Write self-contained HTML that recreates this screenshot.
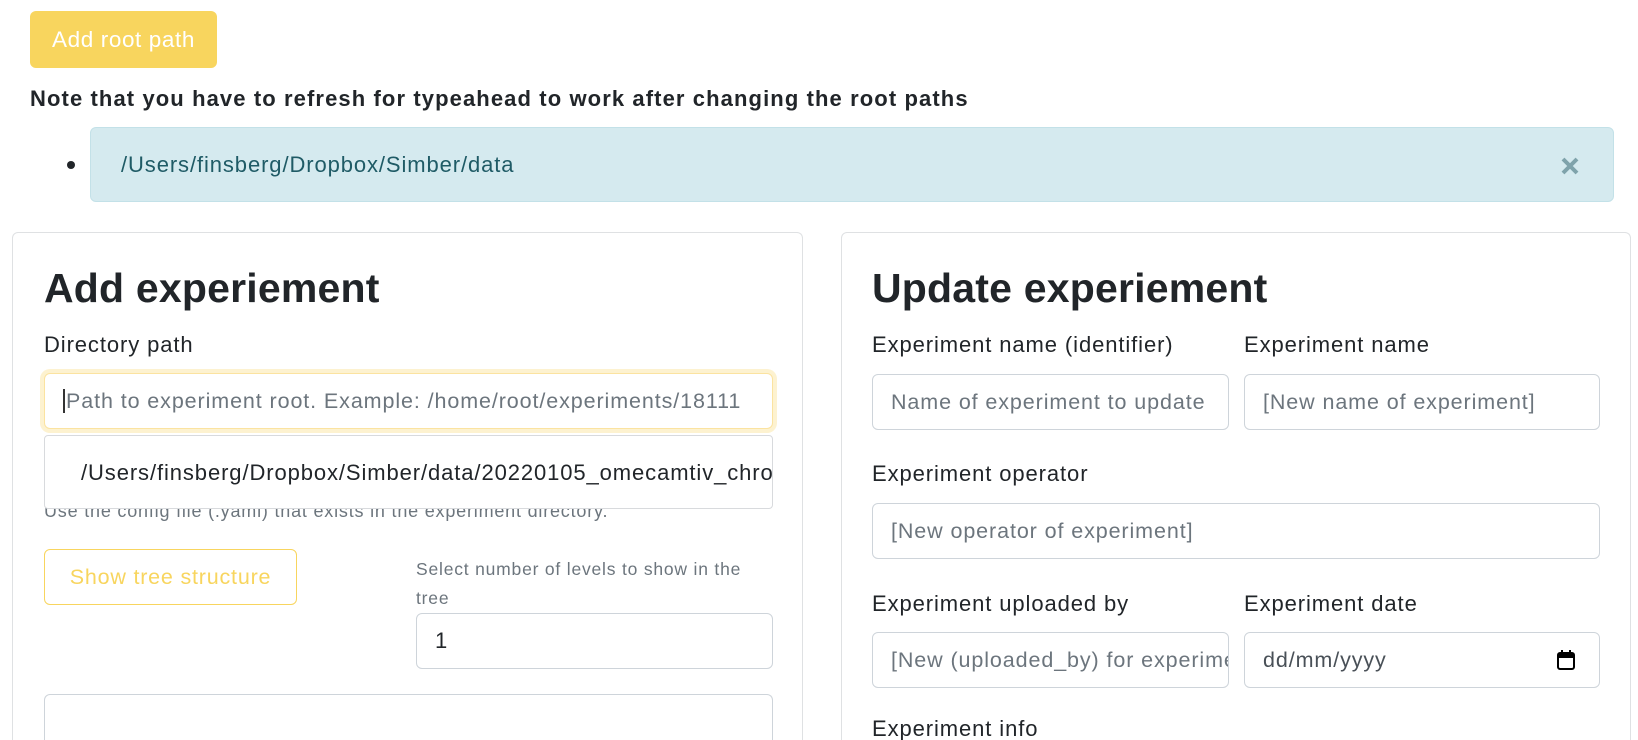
<!DOCTYPE html>
<html><head><meta charset="utf-8"><style>
*{box-sizing:border-box;margin:0;padding:0}
html,body{width:1638px;height:740px;overflow:hidden}
body{background:#fff;font-family:"Liberation Sans",sans-serif;color:#212529;position:relative}
.a{position:absolute;white-space:nowrap}
.inp{position:absolute;border:1px solid #ced4da;border-radius:6px;background:#fff;font-size:21.5px;letter-spacing:0.9px;color:#6c757d;padding-left:18px;display:flex;align-items:center;overflow:hidden;white-space:nowrap}
.lbl{position:absolute;font-size:22px;letter-spacing:0.9px;white-space:nowrap}
h2{position:absolute;font-size:41px;font-weight:bold;letter-spacing:0.2px;white-space:nowrap}
</style></head><body>
<div class="a" style="left:30px;top:11px;width:187px;height:57px;background:#f8d55e;border-radius:6px;color:#fff;font-size:22.5px;letter-spacing:0.6px;display:flex;align-items:center;justify-content:center">Add root path</div>
<div class="a" style="left:30px;top:86px;font-size:22px;letter-spacing:1.1px;font-weight:bold">Note that you have to refresh for typeahead to work after changing the root paths</div>
<div class="a" style="left:67px;top:161px;width:8px;height:8px;border-radius:50%;background:#212529"></div>
<div class="a" style="left:90px;top:127px;width:1524px;height:75px;background:#d5eaef;border:1px solid #c3e1e8;border-radius:6px"></div>
<div class="a" style="left:121px;top:152px;font-size:22px;letter-spacing:0.9px;color:#1f5b66">/Users/finsberg/Dropbox/Simber/data</div>
<svg class="a" style="left:1560px;top:156px" width="20" height="20" viewBox="0 0 20 20"><path d="M3 3L17 17M17 3L3 17" stroke="#7fa3ab" stroke-width="4"/></svg>

<div class="a" style="left:12px;top:232px;width:791px;height:508px;border:1px solid #dfe1e3;border-bottom:none;border-radius:6px 6px 0 0"></div>
<div class="a" style="left:841px;top:232px;width:790px;height:508px;border:1px solid #dfe1e3;border-bottom:none;border-radius:6px 6px 0 0"></div>

<h2 style="left:44px;top:265px">Add experiement</h2>
<div class="lbl" style="left:44px;top:332px">Directory path</div>
<div class="inp" style="left:44px;top:373px;width:729px;height:56px;border-color:#fbe3a0;box-shadow:0 0 0 4px #fdf2d0"><span style="border-left:2px solid #333;height:24px;margin-right:1px"></span>Path to experiment root. Example: /home/root/experiments/18111</div>
<div class="a" style="left:44px;top:501px;font-size:18px;letter-spacing:0.8px;color:#6c757d">Use the config file (.yaml) that exists in the experiment directory.</div>
<div class="a" style="left:44px;top:435px;width:729px;height:74px;background:#fff;border:1px solid #d8dadd;border-radius:4px;overflow:hidden"><div class="a" style="left:36px;top:24px;font-size:22px;letter-spacing:0.9px;color:#212529">/Users/finsberg/Dropbox/Simber/data/20220105_omecamtiv_chronic</div></div>
<div class="a" style="left:44px;top:549px;width:253px;height:56px;border:1px solid #f8d55e;border-radius:6px;color:#f8d55e;font-size:21.5px;letter-spacing:0.8px;display:flex;align-items:center;justify-content:center">Show tree structure</div>
<div class="a" style="left:416px;top:555px;font-size:17.5px;letter-spacing:0.8px;color:#6c757d;line-height:29px;white-space:normal;width:350px">Select number of levels to show in the tree</div>
<div class="inp" style="left:416px;top:613px;width:357px;height:56px;color:#212529;font-size:22px">1</div>
<div class="inp" style="left:44px;top:694px;width:729px;height:46px;border-bottom:none;border-radius:6px 6px 0 0"></div>

<h2 style="left:872px;top:265px">Update experiement</h2>
<div class="lbl" style="left:872px;top:332px">Experiment name (identifier)</div>
<div class="lbl" style="left:1244px;top:332px">Experiment name</div>
<div class="inp" style="left:872px;top:374px;width:357px;height:56px">Name of experiment to update</div>
<div class="inp" style="left:1244px;top:374px;width:356px;height:56px">[New name of experiment]</div>
<div class="lbl" style="left:872px;top:461px">Experiment operator</div>
<div class="inp" style="left:872px;top:503px;width:728px;height:56px">[New operator of experiment]</div>
<div class="lbl" style="left:872px;top:591px">Experiment uploaded by</div>
<div class="lbl" style="left:1244px;top:591px">Experiment date</div>
<div class="inp" style="left:872px;top:632px;width:357px;height:56px">[New (uploaded_by) for experiment]</div>
<div class="inp" style="left:1244px;top:632px;width:356px;height:56px;color:#495057">dd/mm/yyyy</div>
<svg class="a" style="left:1556px;top:649px" width="20" height="22" viewBox="0 0 20 22"><rect x="2" y="4" width="16" height="16" rx="2" fill="none" stroke="#000" stroke-width="2"/><rect x="2" y="4" width="16" height="5" fill="#000"/><rect x="5" y="1" width="2" height="4" fill="#000"/><rect x="13" y="1" width="2" height="4" fill="#000"/></svg>
<div class="a" style="left:872px;top:716px;height:24px;overflow:hidden;font-size:22px;letter-spacing:0.9px">Experiment info</div>
</body></html>
